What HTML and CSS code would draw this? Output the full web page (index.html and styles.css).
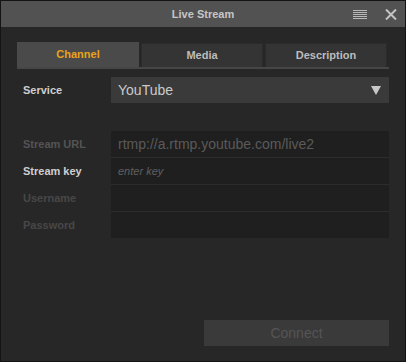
FILE: index.html
```html
<!DOCTYPE html>
<html>
<head>
<meta charset="utf-8">
<link rel="stylesheet" href="styles.css">
</head>
<body>
<div class="window">
  <div class="titlebar">
    <span class="title">Live Stream</span>
    <div class="title-icons">
      <svg class="menu-icon" width="14" height="10" viewBox="0 0 14 10">
        <rect x="0" y="0" width="14" height="1" fill="#b8b8b8"/>
        <rect x="0" y="2" width="14" height="1" fill="#b8b8b8"/>
        <rect x="0" y="4" width="14" height="1" fill="#b8b8b8"/>
        <rect x="0" y="6" width="14" height="1" fill="#b8b8b8"/>
        <rect x="0" y="8" width="14" height="1" fill="#b8b8b8"/>
      </svg>
      <svg class="close-icon" width="12" height="11" viewBox="0 0 12 11">
        <path d="M1 0.5 L11 10.5 M11 0.5 L1 10.5" stroke="#c4c4c4" stroke-width="2"/>
      </svg>
    </div>
  </div>
  <div class="content">
    <div class="tabs">
      <div class="tab active">Channel</div>
      <div class="tab">Media</div>
      <div class="tab">Description</div>
    </div>
    <div class="service-row">
      <span class="label label-bright">Service</span>
      <div class="select">
        <span>YouTube</span>
        <svg width="10" height="9" viewBox="0 0 10 9"><path d="M0 0 H10 L5 9 Z" fill="#c8c8c8"/></svg>
      </div>
    </div>
    <div class="fields">
      <div class="field-row">
        <span class="label label-dim">Stream URL</span>
        <div class="input input-url">rtmp://a.rtmp.youtube.com/live2</div>
      </div>
      <div class="field-row">
        <span class="label label-bright">Stream key</span>
        <div class="input input-key">enter key</div>
      </div>
      <div class="field-row">
        <span class="label label-dimmer">Username</span>
        <div class="input"></div>
      </div>
      <div class="field-row">
        <span class="label label-dimmer">Password</span>
        <div class="input"></div>
      </div>
    </div>
    <div class="actions">
      <div class="connect">Connect</div>
    </div>
  </div>
</div>
</body>
</html>
```

FILE: styles.css
```css
html, body {
  margin: 0;
  padding: 0;
  background: #111;
}
.window {
  box-sizing: border-box;
  width: 406px;
  height: 362px;
  border: 1px solid #141414;
  background: #272727;
  font-family: "Liberation Sans", Arial, sans-serif;
  display: flex;
  flex-direction: column;
}
.titlebar {
  height: 26px;
  background: #525252;
  position: relative;
  display: flex;
  align-items: center;
  justify-content: center;
}
.title {
  font-size: 11px;
  font-weight: bold;
  color: #c6c6c6;
}
.title-icons {
  position: absolute;
  right: 8px;
  top: 8px;
  display: flex;
  align-items: flex-start;
  gap: 18px;
}
.menu-icon { display: block; margin-top: 1px; }
.close-icon { display: block; }
.content {
  padding: 15px 16px 0 16px;
  display: flex;
  flex-direction: column;
}
.tabs {
  display: flex;
  gap: 2px;
  border-bottom: 2px solid #464646;
}
.tab {
  box-sizing: border-box;
  flex: 0 0 122px;
  height: 24px;
  margin-top: 1px;
  padding-bottom: 2px;
  background: #343434;
  border: 1px solid #2b2b2b;
  border-bottom: none;
  color: #bdbdbd;
  font-size: 11px;
  font-weight: bold;
  display: flex;
  align-items: center;
  justify-content: center;
}
.tab.active {
  margin-top: 0;
  height: 25px;
  padding-bottom: 2px;
  background: #4a4a4a;
  border: none;
  color: #e9a21a;
}
.service-row {
  margin-top: 8px;
  display: flex;
  align-items: center;
}
.label {
  box-sizing: border-box;
  flex: 0 0 94px;
  padding-left: 6px;
  padding-bottom: 1px;
  font-size: 11px;
  font-weight: bold;
}
.label-bright { color: #cfcfcf; }
.label-dim { color: #545454; }
.label-dimmer { color: #474747; }
.select {
  flex: 1;
  height: 26px;
  background: #3a3a3a;
  display: flex;
  align-items: center;
  justify-content: space-between;
  padding: 0 8px 0 7px;
  color: #cacaca;
  font-size: 14px;
}
.fields {
  margin-top: 28px;
  display: flex;
  flex-direction: column;
}
.field-row {
  display: flex;
  align-items: center;
}
.input {
  flex: 1;
  box-sizing: border-box;
  height: 27px;
  background: #1f1f1f;
  border-bottom: 1px solid #2c2c2c;
  display: flex;
  align-items: center;
  padding-left: 7px;
  padding-bottom: 1px;
}
.field-row:last-child .input {
  height: 26px;
  border-bottom: none;
}
.input-url {
  color: #5a5a5a;
  font-size: 14px;
}
.input-key {
  color: #5f5f5f;
  font-size: 11px;
  font-style: italic;
}
.actions {
  margin-top: 82px;
  display: flex;
  justify-content: flex-end;
}
.connect {
  width: 185px;
  height: 26px;
  background: #3a3a3a;
  color: #555555;
  font-size: 14px;
  display: flex;
  align-items: center;
  justify-content: center;
}
```
